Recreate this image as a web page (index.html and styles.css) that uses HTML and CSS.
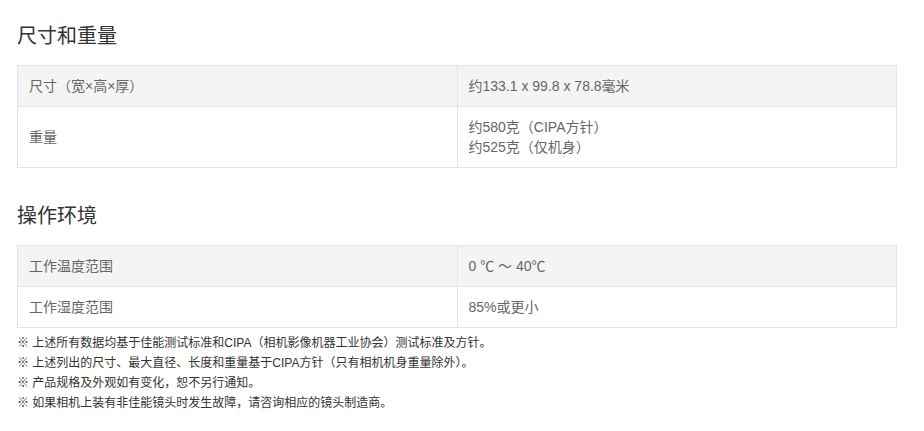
FILE: index.html
```html
<!DOCTYPE html>
<html lang="zh-CN">
<head>
<meta charset="utf-8">
<title>规格</title>
<link rel="stylesheet" href="styles.css">
</head>
<body>
<div class="page">
  <section class="spec">
    <h2 class="spec-title">尺寸和重量</h2>
    <table class="spec-table">
      <colgroup><col class="col-label"><col class="col-value"></colgroup>
      <tr class="row-alt">
        <th>尺寸（宽×高×厚）</th>
        <td>约133.1 x 99.8 x 78.8毫米</td>
      </tr>
      <tr>
        <th>重量</th>
        <td>约580克（CIPA方针）<br>约525克（仅机身）</td>
      </tr>
    </table>
  </section>
  <section class="spec spec-second">
    <h2 class="spec-title">操作环境</h2>
    <table class="spec-table">
      <colgroup><col class="col-label"><col class="col-value"></colgroup>
      <tr class="row-alt">
        <th>工作温度范围</th>
        <td>0 ℃ ～ 40℃</td>
      </tr>
      <tr>
        <th>工作湿度范围</th>
        <td>85%或更小</td>
      </tr>
    </table>
  </section>
  <ul class="notes">
    <li>※ 上述所有数据均基于佳能测试标准和CIPA（相机影像机器工业协会）测试标准及方针。</li>
    <li>※ 上述列出的尺寸、最大直径、长度和重量基于CIPA方针（只有相机机身重量除外）。</li>
    <li>※ 产品规格及外观如有变化，恕不另行通知。</li>
    <li>※ 如果相机上装有非佳能镜头时发生故障，请咨询相应的镜头制造商。</li>
  </ul>
</div>
</body>
</html>
```

FILE: styles.css
```css
html, body {
  margin: 0;
  padding: 0;
  background: #ffffff;
}

body {
  font-family: "Liberation Sans", Arial, "Noto Sans CJK SC", sans-serif;
  color: #333333;
}

.page {
  width: 880px;
  padding: 21px 0 0 17px;
}

.spec-title {
  margin: 0 0 14px 0;
  font-size: 20px;
  line-height: 30px;
  font-weight: normal;
  color: #333333;
}

.spec-second {
  margin-top: 33px;
}

.spec-table {
  width: 880px;
  border-collapse: collapse;
  table-layout: fixed;
  font-size: 14px;
  line-height: 20px;
  color: #666666;
}

.col-label,
.col-value {
  width: 50%;
}

.spec-table th,
.spec-table td {
  border: 1px solid #e5e5e5;
  padding: 10px 11px;
  text-align: left;
  font-weight: normal;
  vertical-align: middle;
}

.row-alt {
  background: #f4f4f4;
}

.notes {
  list-style: none;
  margin: 5px 0 0 0;
  padding: 0;
  font-size: 12px;
  line-height: 20px;
  color: #333333;
}
```
